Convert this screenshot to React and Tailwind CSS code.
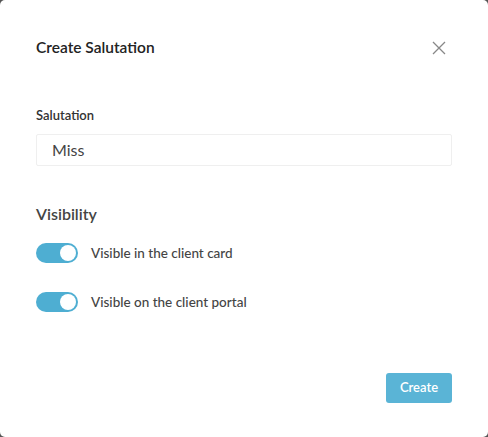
export default function App() {
  return (
    <div className="h-[437px] w-[488px] bg-[#555] font-['Lato','Noto_Sans',sans-serif]">
      <div className="flex h-full flex-col rounded-[5px] bg-white px-9">
        {/* Header */}
        <div className="flex h-[105px] items-start justify-between pt-[37px]">
          <h2 className="text-[15.5px] font-semibold leading-5 text-[#222]">
            Create Salutation
          </h2>
          <button className="mr-[6px] mt-[4px] text-[#888]">
            <svg width="14" height="14" viewBox="0 0 14 14" fill="none" stroke="currentColor" strokeWidth="1.3">
              <path d="M1 1L13 13M13 1L1 13" />
            </svg>
          </button>
        </div>

        {/* Salutation field */}
        <label className="text-[13px] font-semibold leading-5 text-[#333]">
          Salutation
        </label>
        <div className="mt-[9px] flex h-[32px] items-center rounded-[2px] border border-[#efefef] px-[15px] text-[16px] text-[#444]">
          Miss
        </div>

        {/* Visibility */}
        <h3 className="mt-[38px] text-[16px] font-semibold leading-5 text-[#444]">
          Visibility
        </h3>
        <div className="mt-[19px] flex flex-col gap-[29px]">
          {["Visible in the client card", "Visible on the client portal"].map((t) => (
            <div key={t} className="flex items-center gap-[13px]">
              <div className="flex h-[20px] w-[42px] items-center justify-end rounded-full bg-[#4eaed2] pr-[2px]">
                <div className="h-[16px] w-[16px] rounded-full bg-white" />
              </div>
              <span className="text-[13.5px] font-medium leading-5 text-[#444]">{t}</span>
            </div>
          ))}
        </div>

        {/* Footer */}
        <div className="mt-auto flex justify-end pb-[34px]">
          <button className="h-[30px] w-[66px] rounded-[3px] bg-[#5ab4d6] text-[13px] font-semibold text-white">
            Create
          </button>
        </div>
      </div>
    </div>
  );
}
